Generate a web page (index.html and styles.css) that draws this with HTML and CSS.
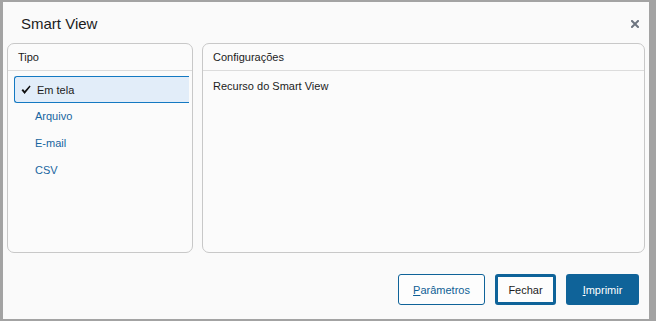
FILE: index.html
```html
<!DOCTYPE html>
<html lang="pt-BR">

<head>
    <meta charset="UTF-8">
    <title>Smart View</title>
    <link rel="stylesheet" href="styles.css">
</head>

<body>
    <section class="dialog">
        <div class="dialogheader">
            <h2 class="dialogtitle">Smart View</h2>
            <button class="closebtn" title="Fechar">
                <svg width="8" height="8" viewBox="0 0 8 8">
                    <path d="M1 1 L7 7 M7 1 L1 7" stroke="#6e7580" stroke-width="2" stroke-linecap="square" />
                </svg>
            </button>
        </div>
        <div class="panels">
            <div class="panel typepanel">
                <div class="panelheader">Tipo</div>
                <ul class="typelist">
                    <li class="typeitem selected">
                        <svg class="check" width="10" height="10" viewBox="0 0 10 10">
                            <path d="M0.5 5.2 L2 4 L3.6 6 L8.6 0.6 L9.6 1.6 L3.6 9 Z" fill="#111" />
                        </svg>Em tela
                    </li>
                    <li class="typeitem">Arquivo</li>
                    <li class="typeitem">E-mail</li>
                    <li class="typeitem">CSV</li>
                </ul>
            </div>
            <div class="panel configpanel">
                <div class="panelheader">Configurações</div>
                <p class="paneltext">Recurso do Smart View</p>
            </div>
        </div>
        <div class="dialogfooter">
            <button class="btn btn-outline"><u>P</u>arâmetros</button>
            <button class="btn btn-focus">Fechar</button>
            <button class="btn btn-primary"><u>I</u>mprimir</button>
        </div>
    </section>
</body>

</html>
```

FILE: styles.css
```css
body {
    margin: 0;
    background-color: #a3a3a3;
    font-family: 'Liberation Sans', Arial, sans-serif;
    height: 321px;
    overflow: hidden;
}

.dialog {
    display: flex;
    flex-direction: column;
    box-sizing: border-box;
    width: 646px;
    height: 317px;
    margin: 2px 0 0 3px;
    background-color: #fafafa;
    padding: 0 4px;
}

.dialogheader {
    display: flex;
    align-items: center;
    justify-content: space-between;
    height: 41px;
    padding: 0 6px 0 14px;
}

.dialogtitle {
    margin: 0;
    font-size: 15px;
    font-weight: normal;
    color: #1c1c1c;
    padding-top: 2px;
}

.closebtn {
    border: none;
    background: none;
    padding: 0;
    margin-top: 2px;
    width: 8px;
    height: 8px;
    display: flex;
}

.panels {
    display: flex;
    gap: 9px;
    height: 210px;
}

.panel {
    box-sizing: border-box;
    border: 1px solid #c8c8c8;
    border-radius: 7px;
    background-color: #fbfbfb;
    overflow: hidden;
}

.typepanel {
    width: 186px;
}

.configpanel {
    flex: 1;
}

.panelheader {
    height: 26px;
    line-height: 27px;
    border-bottom: 1px solid #dcdcdc;
    padding-left: 10px;
    font-size: 11px;
    color: #1c1c1c;
}

.typelist {
    list-style: none;
    margin: 5px 3px 0 6px;
    padding: 0;
}

.typeitem {
    box-sizing: border-box;
    height: 27px;
    line-height: 27px;
    padding-left: 21px;
    font-size: 11px;
    color: #1765a0;
}

.typeitem.selected {
    display: flex;
    align-items: center;
    border: 1px solid #1479c2;
    border-right: none;
    border-radius: 3px 0 0 3px;
    background-color: #e2edf9;
    color: #1c1c1c;
    padding: 1px 0 0 6px;
}

.check {
    margin-right: 6px;
}

.paneltext {
    margin: 9px 0 0 10px;
    font-size: 11px;
    color: #1c1c1c;
}

.dialogfooter {
    display: flex;
    justify-content: flex-end;
    gap: 10px;
    padding: 21px 6px 0 0;
}

.btn {
    box-sizing: border-box;
    height: 31px;
    border-radius: 3px;
    font-family: 'Liberation Sans', Arial, sans-serif;
    font-size: 11px;
    padding: 0;
    background-color: #fdfdfd;
}

.btn-outline {
    width: 87px;
    border: 1px solid #0f6399;
    color: #0f5f95;
}

.btn-focus {
    width: 61px;
    border: 3px solid #0e6399;
    color: #1c1c1c;
}

.btn-primary {
    width: 73px;
    border: none;
    background-color: #0f6399;
    color: #fff;
}
```
